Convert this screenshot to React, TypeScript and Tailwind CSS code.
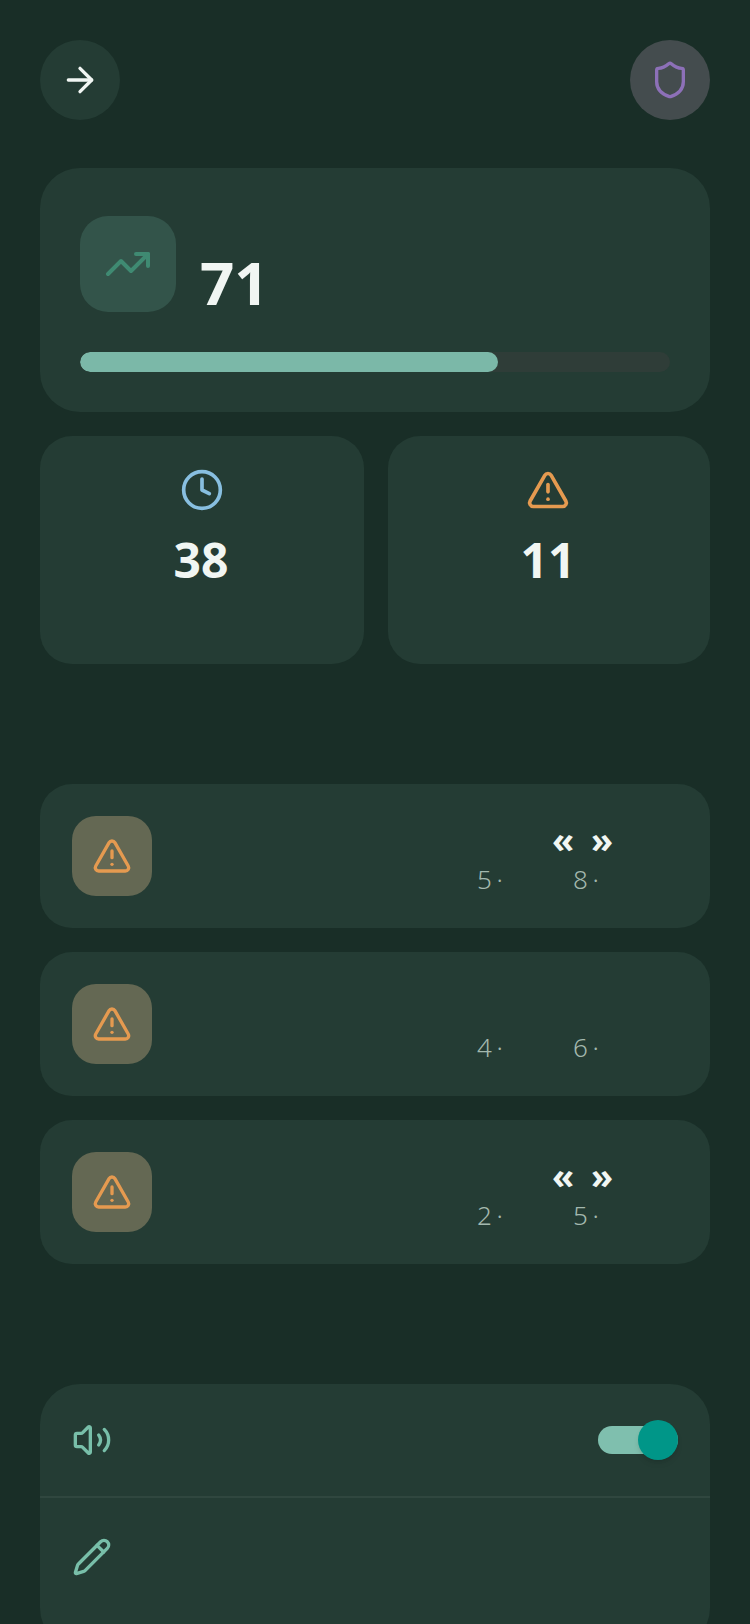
import { ArrowRight, Clock, Pencil, Shield, TrendingUp, TriangleAlert, Volume2 } from "lucide-react";
import React from "react";

const rows = [
  { a: "5", b: "8", quotes: true },
  { a: "4", b: "6", quotes: false },
  { a: "2", b: "5", quotes: true },
];

const App: React.FC = () => {
  return (
    <div className="h-[1624px] overflow-hidden bg-[#192e27] px-10 pt-10 font-['Noto_Sans',sans-serif] text-[#f1f6f3]">
      <div className="flex justify-between">
        <button className="flex h-20 w-20 items-center justify-center rounded-full bg-[#243c34]">
          <ArrowRight size={40} strokeWidth={2} />
        </button>
        <button className="flex h-20 w-20 items-center justify-center rounded-full bg-[#444c4e]">
          <Shield size={40} strokeWidth={2} className="text-[#8d70b8]" />
        </button>
      </div>

      <div className="mt-12 rounded-[40px] bg-[#243c34] px-10 pt-12 pb-10">
        <div className="flex items-end gap-6">
          <div className="flex h-24 w-24 shrink-0 items-center justify-center rounded-[28px] bg-[#33544a]">
            <TrendingUp size={48} strokeWidth={2} className="text-[#3f8a72]" />
          </div>
          <div className="text-[60px] leading-[60px] font-bold">71</div>
        </div>
        <div className="mt-10 h-5 overflow-hidden rounded-full bg-[#2f3d38]">
          <div className="h-full w-[70.8%] rounded-full bg-[#7bb8a8]" />
        </div>
      </div>

      <div className="mt-6 grid grid-cols-[324px_1fr] gap-6">
        <div className="flex h-[228px] flex-col items-center rounded-[32px] bg-[#243c34] pt-8">
          <Clock size={44} strokeWidth={2} className="text-[#88bfe0]" />
          <div className="mt-[15px] pr-[2px] text-[48px] leading-[65px] font-bold">38</div>
        </div>
        <div className="flex h-[228px] flex-col items-center rounded-[32px] bg-[#243c34] pt-8 pr-[2px]">
          <TriangleAlert size={44} strokeWidth={2} className="text-[#e59a50]" />
          <div className="mt-[15px] text-[48px] leading-[65px] font-bold">11</div>
        </div>
      </div>

      <div className="mt-[120px] flex flex-col gap-6">
        {rows.map((row, i) => (
          <div key={i} className="flex h-36 items-center rounded-[32px] bg-[#243c34] px-8">
            <div className="flex h-20 w-20 shrink-0 items-center justify-center rounded-3xl bg-[#646853]">
              <TriangleAlert size={40} strokeWidth={2} className="text-[#e59a50]" />
            </div>
            <div className="ml-[325px] flex shrink-0 flex-col">
              <div className="flex h-[44px] items-end gap-[17px] pl-[75px] text-[36px] leading-[34px] font-bold">
                {row.quotes && (
                  <>
                    <span>«</span>
                    <span>»</span>
                  </>
                )}
              </div>
              <div className="mt-[2px] flex gap-[70px] text-[26px] leading-[40px] font-light text-[#a3b8ae] [word-spacing:-2px]">
                <span>{row.a} ·</span>
                <span>{row.b} ·</span>
              </div>
            </div>
          </div>
        ))}
      </div>

      <div className="mt-[120px] rounded-[40px] bg-[#243c34]">
        <div className="flex h-[114px] items-center justify-between border-b-2 border-[#30473f] px-8">
          <Volume2 size={40} strokeWidth={2} className="text-[#78bfa9]" />
          <div className="relative h-7 w-20 rounded-full bg-[#7fbfae]">
            <div className="absolute top-[-6px] right-0 h-10 w-10 rounded-full bg-[#009688] shadow-md" />
          </div>
        </div>
        <div className="flex h-[150px] items-start pt-[39px] pl-8">
          <Pencil size={40} strokeWidth={2} className="text-[#78bfa9]" />
        </div>
      </div>
    </div>
  );
};

export default App;
